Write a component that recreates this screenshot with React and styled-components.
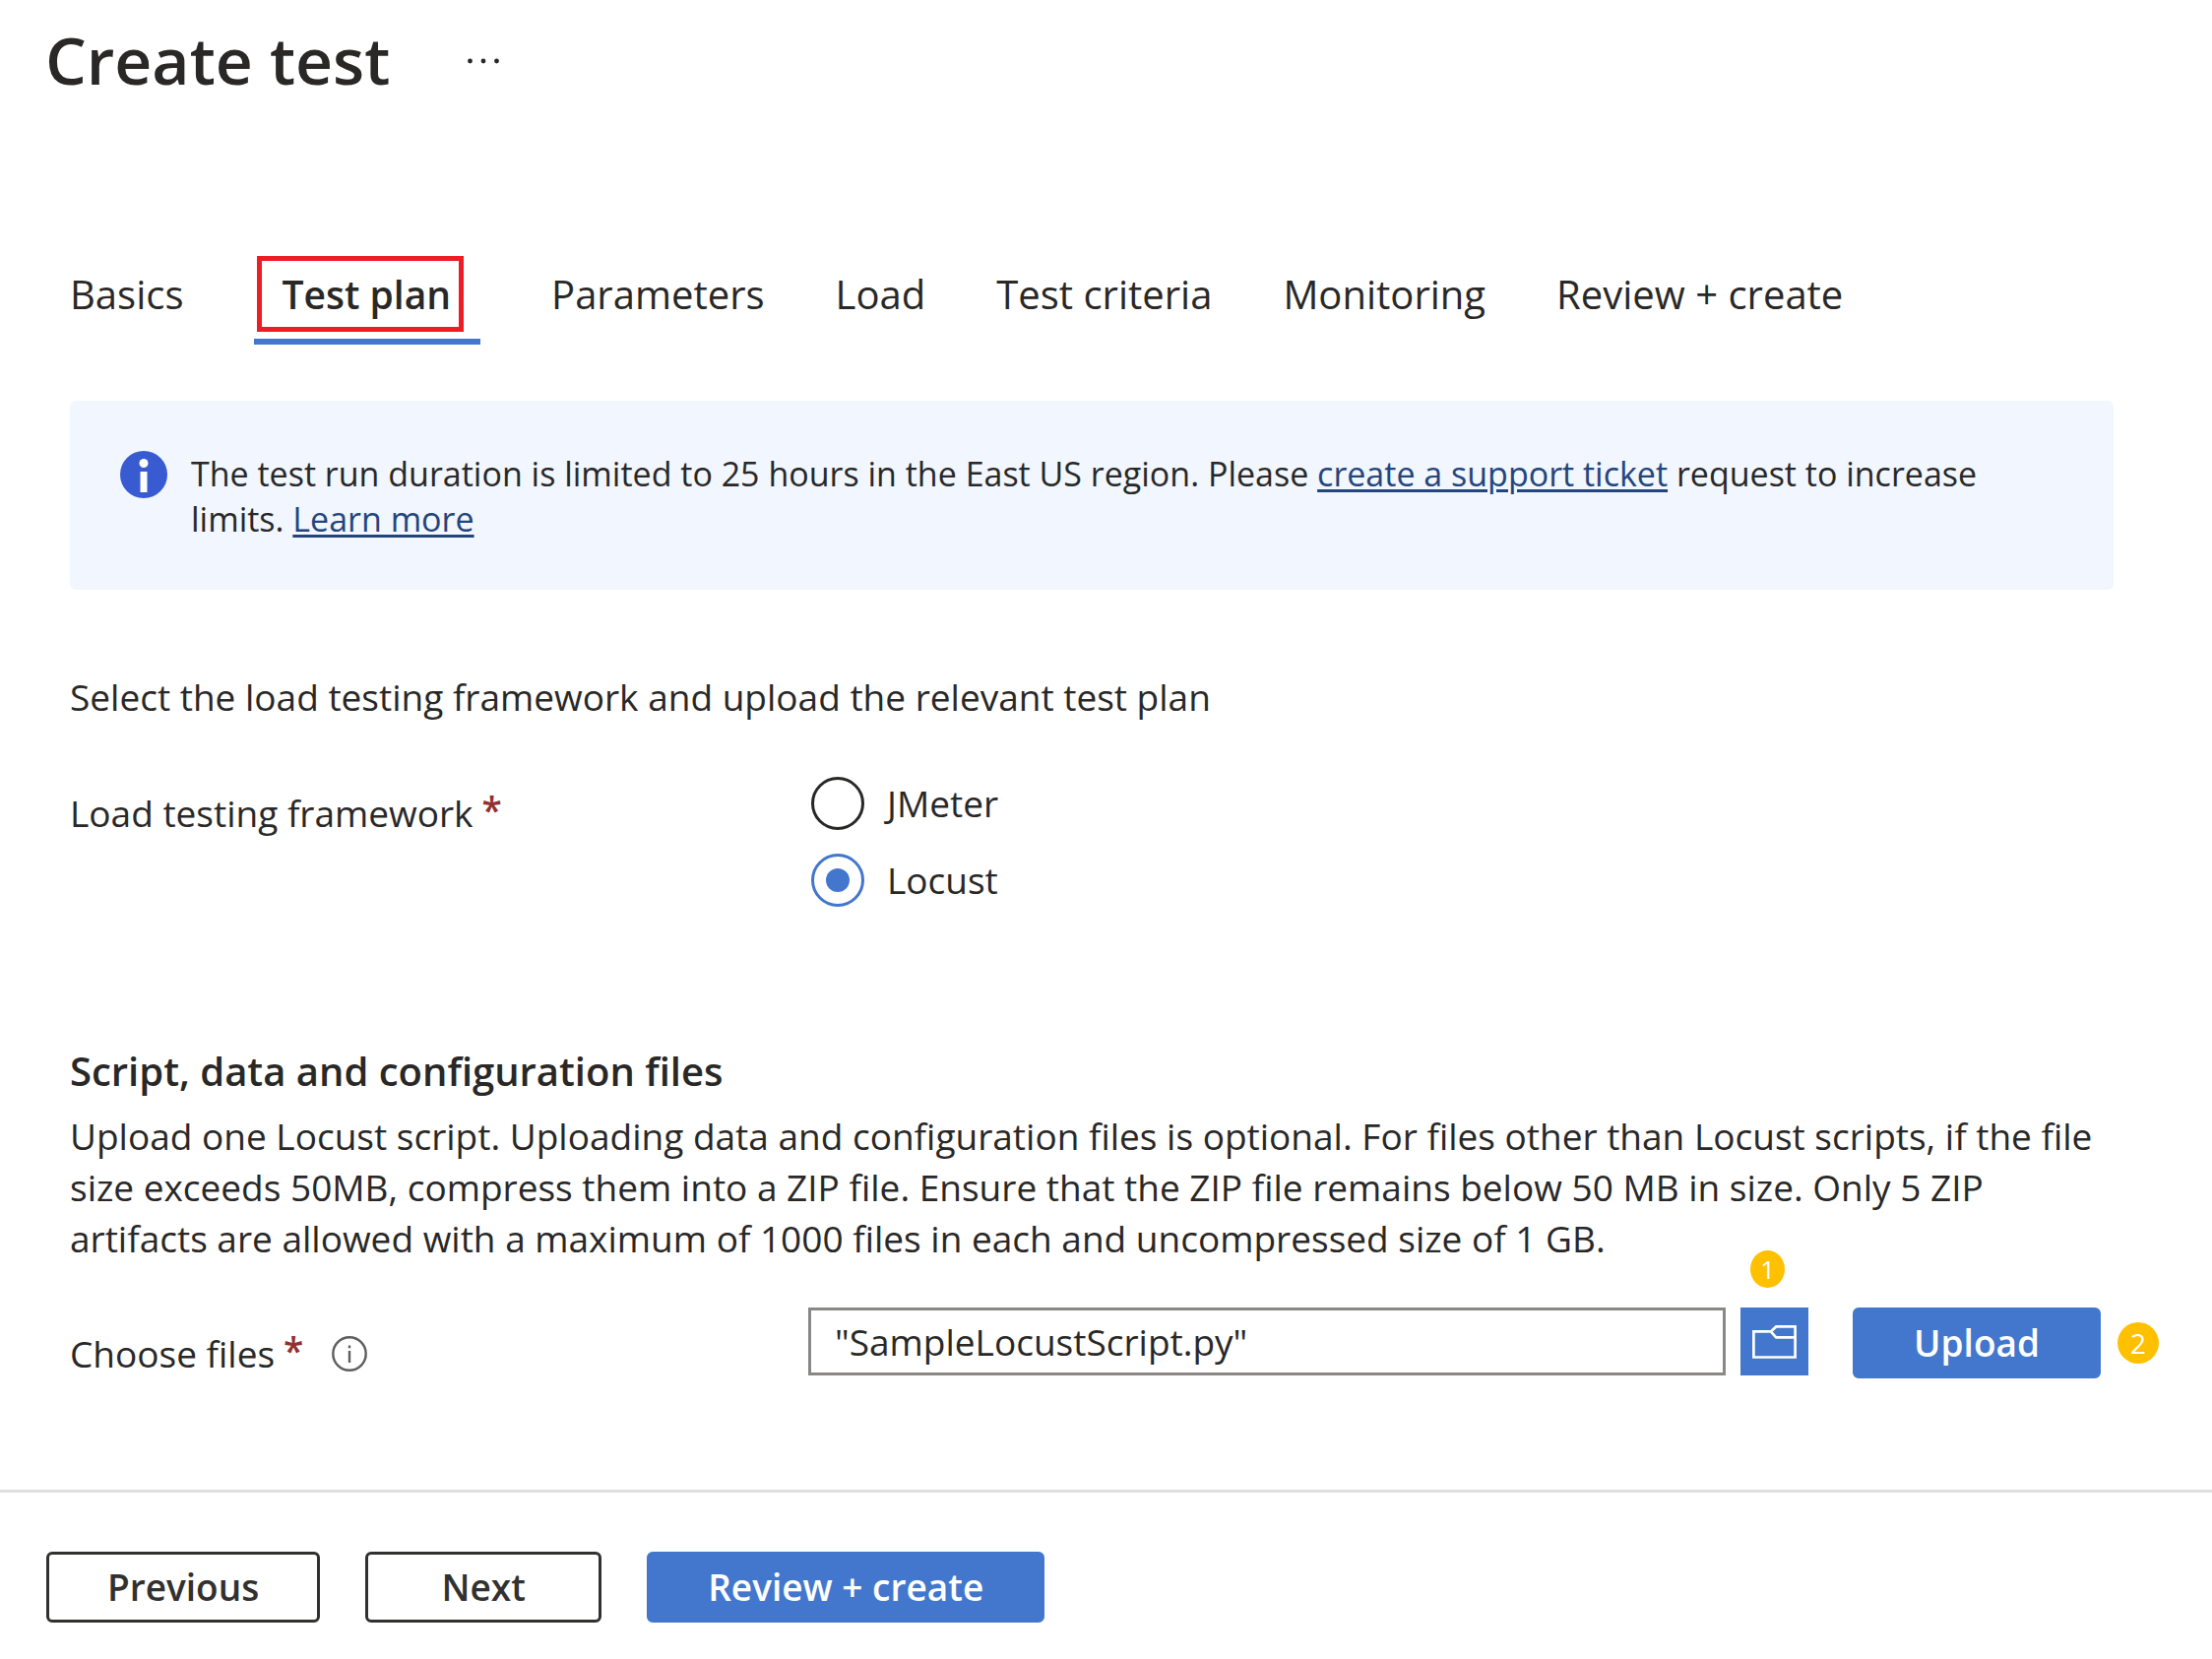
import React, { useState } from 'react';
import styled, { createGlobalStyle, css } from 'styled-components';

const color = {
  text: '#292827',
  blue: '#4277cd',
  link: '#24457c',
  info: '#385bd2',
  infoBg: '#f1f6ff',
  required: '#91302f',
  border: '#8a8886',
  rule: '#dfdfdf',
  highlight: '#ee1c25',
  badge: '#ffc000',
};

const GlobalStyle = createGlobalStyle`
  *, *::before, *::after { box-sizing: border-box; }
  body {
    margin: 0;
    background: #fff;
    color: ${color.text};
    font: 400 37px/52px "Open Sans", "Noto Sans", sans-serif;
  }
  button, input { font: inherit; color: inherit; }
`;

const Header = styled.header`
  display: flex;
  align-items: center;
  gap: 70px;
  padding: 14px 47px 0 46px;
`;

const Title = styled.h1`
  margin: 0;
  font-size: 66px;
  font-weight: 600;
  line-height: 92px;
`;

const MoreButton = styled.button`
  display: flex;
  padding: 8px;
  border: 0;
  background: none;
`;

const Main = styled.main`
  padding: 154px 100px 112px 71px;
`;

const TabList = styled.div`
  display: flex;
  gap: 72px;
`;

const Tab = styled.button`
  padding: 0;
  border: 0;
  border-bottom: 6px solid transparent;
  background: none;
  font-size: 40px;
  line-height: 67px;
  white-space: nowrap;
  ${({ $active }) =>
    $active &&
    css`
      padding: 0 17px 0 3px;
      border-color: ${color.blue};
      font-size: 39px;
      font-weight: 600;
    `}
`;

const TabLabel = styled.span`
  display: block;
  margin-bottom: 7px;
  border: 5px solid transparent;
  border-width: 5px 0;
  ${({ $highlighted }) =>
    $highlighted &&
    css`
      padding: 0 8px 0 20px;
      border: 5px solid ${color.highlight};
    `}
`;

const InfoBanner = styled.section`
  display: flex;
  gap: 24px;
  margin-top: 57px;
  padding: 51px 51px 49px;
  border-radius: 6px;
  background: ${color.infoBg};
  font-size: 34px;
  line-height: 46px;

  p { margin: 0; }
  svg { flex: none; }
`;

const Link = styled.a`
  color: ${color.link};
  text-decoration: underline;
  text-decoration-thickness: 3px;
  text-underline-offset: 3px;
`;

const Intro = styled.p`
  margin: 83px 0 55px;
`;

const Field = styled.div`
  display: grid;
  grid-template-columns: 750px 1fr;
  align-items: start;
`;

const FieldLabel = styled.div`
  display: flex;
  align-items: center;
  padding-top: ${({ $top }) => $top}px;
`;

const Required = styled.span`
  align-self: flex-start;
  margin-left: 9px;
  color: ${color.required};
  font-weight: 600;
  line-height: 46px;
`;

const TipButton = styled.button`
  display: flex;
  margin-left: 29px;
  padding: 0;
  border: 0;
  background: none;
`;

const RadioGroup = styled.div`
  display: grid;
  gap: 24px;
  padding-left: 3px;
`;

const RadioLabel = styled.label`
  display: flex;
  align-items: center;
  gap: 23px;
  line-height: 54px;
`;

const Radio = styled.input`
  appearance: none;
  display: grid;
  place-content: center;
  width: 54px;
  height: 54px;
  margin: 0;
  border: 3px solid ${color.text};
  border-radius: 50%;
  background: #fff;

  &:checked { border-color: ${color.blue}; }
  &:checked::before {
    content: "";
    width: 24px;
    height: 24px;
    border-radius: 50%;
    background: ${color.blue};
  }
`;

const SectionTitle = styled.h2`
  margin: 139px 0 12px;
  font-size: 40px;
  font-weight: 600;
  line-height: 56px;
`;

const Description = styled.p`
  margin: 0 13px 44px 0;
`;

const FilePicker = styled.div`
  display: flex;
  align-items: flex-start;
  margin-right: 13px;
`;

const FileInput = styled.input`
  flex: 1;
  min-width: 0;
  height: 69px;
  padding: 0 24px;
  border: 3px solid ${color.border};
  border-radius: 0;
  background: #fff;
`;

const Anchor = styled.div`
  position: relative;
  display: flex;
  margin-left: ${({ $gap }) => $gap}px;
`;

const BrowseButton = styled.button`
  display: grid;
  place-items: center;
  width: 69px;
  height: 69px;
  padding: 0;
  border: 0;
  background: ${color.blue};
`;

const Badge = styled.span`
  position: absolute;
  display: grid;
  place-items: center;
  border-radius: 50%;
  background: ${color.badge};
  color: #fff;
  font-weight: 500;
  line-height: 1;
  ${({ $place }) =>
    $place === 'above'
      ? css`
          width: 35px;
          height: 38px;
          left: 10px;
          bottom: calc(100% + 20px);
          font-size: 26px;
        `
      : css`
          width: 42px;
          height: 42px;
          left: calc(100% + 17px);
          top: 15px;
          font-size: 28px;
        `}
`;

const Button = styled.button`
  height: 72px;
  min-width: 240px;
  padding: 0 59px;
  border: 3px solid ${({ $primary }) => ($primary ? color.blue : '#323130')};
  border-radius: 6px;
  background: ${({ $primary }) => ($primary ? color.blue : '#fff')};
  color: ${({ $primary }) => ($primary ? '#fff' : '#323130')};
  font-weight: 600;
  line-height: 52px;
  white-space: nowrap;
`;

const Footer = styled.footer`
  display: flex;
  gap: 46px;
  padding: 60px 47px 37px;
  border-top: 3px solid ${color.rule};
`;

const tabs = ['Basics', 'Test plan', 'Parameters', 'Load', 'Test criteria', 'Monitoring', 'Review + create'];
const frameworks = ['JMeter', 'Locust'];

const MoreIcon = () => (
  <svg width="34" height="10" viewBox="0 0 34 10" fill={color.text} aria-hidden="true">
    <circle cx="3.5" cy="7" r="2.4" />
    <circle cx="17" cy="7" r="2.4" />
    <circle cx="30.5" cy="7" r="2.4" />
  </svg>
);

const InfoIcon = () => (
  <svg width="48" height="48" viewBox="0 0 48 48" aria-hidden="true">
    <circle cx="24" cy="24" r="24" fill={color.info} />
    <circle cx="24" cy="12.5" r="4.5" fill="#fff" />
    <rect x="20.5" y="21" width="7" height="21" fill="#fff" />
  </svg>
);

const TipIcon = () => (
  <svg width="36" height="36" viewBox="0 0 36 36" fill="none" stroke="#5f5e5d" aria-hidden="true">
    <circle cx="18" cy="18" r="16.7" strokeWidth="2.4" />
    <path d="M18 15v12M18 9.5v2.7" strokeWidth="2.4" />
  </svg>
);

const FolderIcon = () => (
  <svg width="45" height="34" viewBox="0 0 45 34" fill="none" stroke="#fff" strokeWidth="2.7" aria-hidden="true">
    <path d="M1.4 6.4H18.8L24.2 1.4H43.6V32.5H1.4ZM18.8 6.4L24.2 12.3H43.6" />
  </svg>
);

export default function App() {
  const [tab, setTab] = useState('Test plan');
  const [framework, setFramework] = useState('Locust');
  const [file, setFile] = useState('"SampleLocustScript.py"');

  return (
    <>
      <GlobalStyle />
      <Header>
        <Title>Create test</Title>
        <MoreButton type="button" aria-label="More actions">
          <MoreIcon />
        </MoreButton>
      </Header>
      <Main>
        <TabList role="tablist">
          {tabs.map((name) => (
            <Tab
              key={name}
              type="button"
              role="tab"
              aria-selected={tab === name}
              $active={tab === name}
              onClick={() => setTab(name)}
            >
              <TabLabel $highlighted={name === 'Test plan'}>{name}</TabLabel>
            </Tab>
          ))}
        </TabList>

        <InfoBanner>
          <InfoIcon />
          <p>
            The test run duration is limited to 25 hours in the East US region. Please{' '}
            <Link href="#support">create a support ticket</Link> request to increase limits.{' '}
            <Link href="#learn">Learn more</Link>
          </p>
        </InfoBanner>

        <Intro>Select the load testing framework and upload the relevant test plan</Intro>

        <Field role="radiogroup" aria-labelledby="framework-label">
          <FieldLabel $top={11}>
            <span id="framework-label">Load testing framework</span>
            <Required>*</Required>
          </FieldLabel>
          <RadioGroup>
            {frameworks.map((name) => (
              <RadioLabel key={name}>
                <Radio
                  type="radio"
                  name="framework"
                  value={name}
                  checked={framework === name}
                  onChange={() => setFramework(name)}
                />
                {name}
              </RadioLabel>
            ))}
          </RadioGroup>
        </Field>

        <SectionTitle>Script, data and configuration files</SectionTitle>
        <Description>
          Upload one Locust script. Uploading data and configuration files is optional. For files other than
          Locust scripts, if the file size exceeds 50MB, compress them into a ZIP file. Ensure that the ZIP file
          remains below 50 MB in size. Only 5 ZIP artifacts are allowed with a maximum of 1000 files in each and
          uncompressed size of 1 GB.
        </Description>

        <Field>
          <FieldLabel $top={21}>
            <label htmlFor="files">Choose files</label>
            <Required>*</Required>
            <TipButton type="button" aria-label="About files">
              <TipIcon />
            </TipButton>
          </FieldLabel>
          <FilePicker>
            <FileInput id="files" type="text" value={file} onChange={(e) => setFile(e.target.value)} />
            <Anchor $gap={15}>
              <BrowseButton type="button" aria-label="Browse files">
                <FolderIcon />
              </BrowseButton>
              <Badge $place="above">1</Badge>
            </Anchor>
            <Anchor $gap={45}>
              <Button type="button" $primary>
                Upload
              </Button>
              <Badge $place="right">2</Badge>
            </Anchor>
          </FilePicker>
        </Field>
      </Main>
      <Footer>
        <Button type="button">Previous</Button>
        <Button type="button">Next</Button>
        <Button type="button" $primary>
          Review + create
        </Button>
      </Footer>
    </>
  );
}
